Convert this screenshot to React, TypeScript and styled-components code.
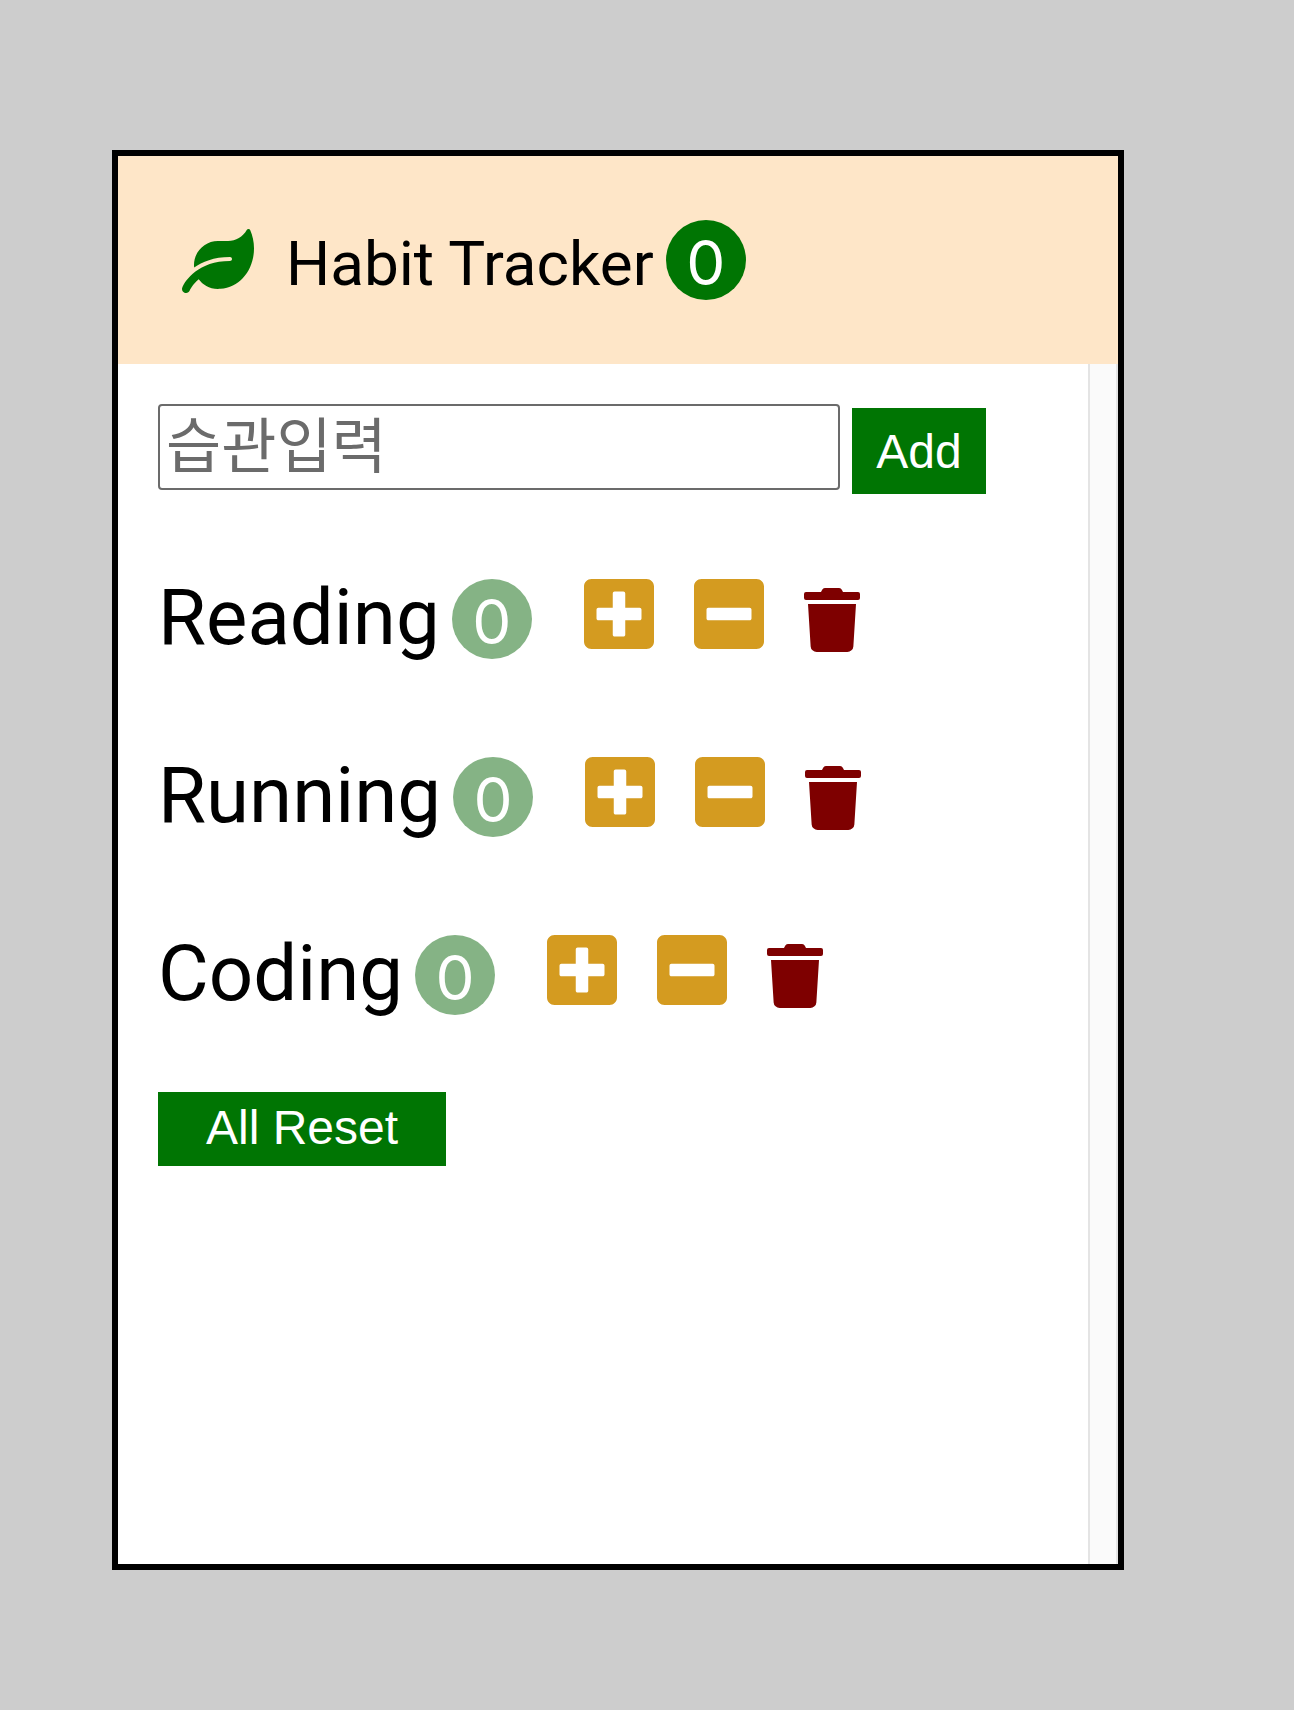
import React, { useState } from "react";
import type { FormEvent } from "react";
import styled, { createGlobalStyle } from "styled-components";
import { FaLeaf, FaMinusSquare, FaPlusSquare, FaTrash } from "react-icons/fa";

const colors = {
  page: "#cdcdcd",
  frame: "#000000",
  header: "#fee6c8",
  green: "#007503",
  softGreen: "#85b385",
  gold: "#d49b20",
  maroon: "#7e0000",
  field: "#6b6b6b",
};

const GlobalStyle = createGlobalStyle`
  *, *::before, *::after { box-sizing: border-box; }
  body {
    margin: 0;
    background: ${colors.page};
    font-family: Roboto, "Noto Sans CJK KR", sans-serif;
    color: #000;
  }
`;

const Page = styled.div`
  display: flex;
  min-height: 100vh;
  padding: 150px 170px 140px 112px;
`;

const Frame = styled.div`
  display: flex;
  flex: 1;
  flex-direction: column;
  min-width: 0;
  border: 6px solid ${colors.frame};
  background: #fff;
`;

const Header = styled.header`
  display: flex;
  align-items: baseline;
  padding: 64px;
  background: ${colors.header};
`;

const Logo = styled.span`
  margin-right: 32px;
  font-size: 64px;
  line-height: 1;
  color: ${colors.green};

  svg {
    width: 72px;
    vertical-align: -8px;
  }
`;

const Title = styled.h1`
  margin: 0;
  font-size: 62px;
  font-weight: 400;
  line-height: 72px;
`;

const Badge = styled.span<{ $soft?: boolean }>`
  flex: none;
  width: 80px;
  height: 80px;
  margin-left: 12px;
  border-radius: 50%;
  background: ${({ $soft }) => ($soft ? colors.softGreen : colors.green)};
  color: #fff;
  font-family: Inter, sans-serif;
  font-size: 62px;
  line-height: 85px;
  text-align: center;
`;

const Body = styled.div`
  display: flex;
  flex: 1;
`;

const Content = styled.main`
  flex: 1;
  min-width: 0;
  padding: 40px;
`;

const ScrollTrack = styled.div`
  width: 30px;
  border: solid #e4e4e4;
  border-width: 0 2px;
  background: #fafafa;
`;

const AddForm = styled.form`
  display: flex;
  align-items: baseline;
  gap: 12px;
`;

const HabitInput = styled.input`
  flex: 0 1 682px;
  min-width: 0;
  height: 86px;
  padding: 2px 6px;
  border: 2px solid ${colors.field};
  border-radius: 4px;
  background: #fff;
  font-family: "Liberation Sans", "Noto Sans CJK KR", sans-serif;
  font-size: 60px;

  &::placeholder {
    color: ${colors.field};
    opacity: 1;
  }
`;

const GreenButton = styled.button<{ $wide?: boolean }>`
  width: ${({ $wide }) => ($wide ? "288px" : "134px")};
  height: ${({ $wide }) => ($wide ? "74px" : "86px")};
  padding: ${({ $wide }) => ($wide ? "0 0 4px" : "0")};
  border: 0;
  background: ${colors.green};
  color: #fff;
  font-family: "Liberation Sans", Arial, sans-serif;
  font-size: 48px;
  cursor: pointer;
`;

const HabitList = styled.ul`
  display: flex;
  flex-direction: column;
  gap: 80px;
  margin: 75px 0 69px;
  padding: 0;
  list-style: none;
`;

const HabitRow = styled.li`
  display: flex;
  align-items: baseline;
`;

const HabitName = styled.span`
  font-size: 78px;
  line-height: 98px;
`;

const Actions = styled.span`
  display: flex;
  align-items: baseline;
  gap: 40px;
  margin-left: 52px;
`;

const IconButton = styled.button<{ $danger?: boolean }>`
  padding: 0;
  border: 0;
  background: none;
  color: ${({ $danger }) => ($danger ? colors.maroon : colors.gold)};
  font-family: inherit;
  font-size: ${({ $danger }) => ($danger ? "64px" : "80px")};
  line-height: 1;
  cursor: pointer;

  svg {
    width: ${({ $danger }) => ($danger ? "56px" : "70px")};
    vertical-align: ${({ $danger }) => ($danger ? "-8px" : "-10px")};
  }
`;

interface Habit {
  id: number;
  name: string;
  count: number;
}

const initialHabits: Habit[] = [
  { id: 1, name: "Reading", count: 0 },
  { id: 2, name: "Running", count: 0 },
  { id: 3, name: "Coding", count: 0 },
];

export default function App() {
  const [habits, setHabits] = useState(initialHabits);
  const [draft, setDraft] = useState("");

  const change = (id: number, step: number) =>
    setHabits((list) =>
      list.map((h) => (h.id === id ? { ...h, count: Math.max(0, h.count + step) } : h))
    );

  const add = (event: FormEvent) => {
    event.preventDefault();
    const name = draft.trim();
    if (!name) return;
    setHabits((list) => [...list, { id: Date.now(), name, count: 0 }]);
    setDraft("");
  };

  return (
    <>
      <GlobalStyle />
      <Page>
        <Frame>
          <Header>
            <Logo>
              <FaLeaf aria-hidden />
            </Logo>
            <Title>Habit Tracker</Title>
            <Badge>{habits.filter((h) => h.count > 0).length}</Badge>
          </Header>
          <Body>
            <Content>
              <AddForm onSubmit={add}>
                <HabitInput
                  aria-label="습관입력"
                  placeholder="습관입력"
                  value={draft}
                  onChange={(e) => setDraft(e.target.value)}
                />
                <GreenButton type="submit">Add</GreenButton>
              </AddForm>
              <HabitList>
                {habits.map((habit) => (
                  <HabitRow key={habit.id}>
                    <HabitName>{habit.name}</HabitName>
                    <Badge $soft>{habit.count}</Badge>
                    <Actions>
                      <IconButton type="button" aria-label="Increase" onClick={() => change(habit.id, 1)}>
                        <FaPlusSquare />
                      </IconButton>
                      <IconButton type="button" aria-label="Decrease" onClick={() => change(habit.id, -1)}>
                        <FaMinusSquare />
                      </IconButton>
                      <IconButton
                        type="button"
                        $danger
                        aria-label="Delete"
                        onClick={() => setHabits((list) => list.filter((h) => h.id !== habit.id))}
                      >
                        <FaTrash />
                      </IconButton>
                    </Actions>
                  </HabitRow>
                ))}
              </HabitList>
              <GreenButton
                type="button"
                $wide
                onClick={() => setHabits((list) => list.map((h) => ({ ...h, count: 0 })))}
              >
                All Reset
              </GreenButton>
            </Content>
            <ScrollTrack aria-hidden />
          </Body>
        </Frame>
      </Page>
    </>
  );
}
